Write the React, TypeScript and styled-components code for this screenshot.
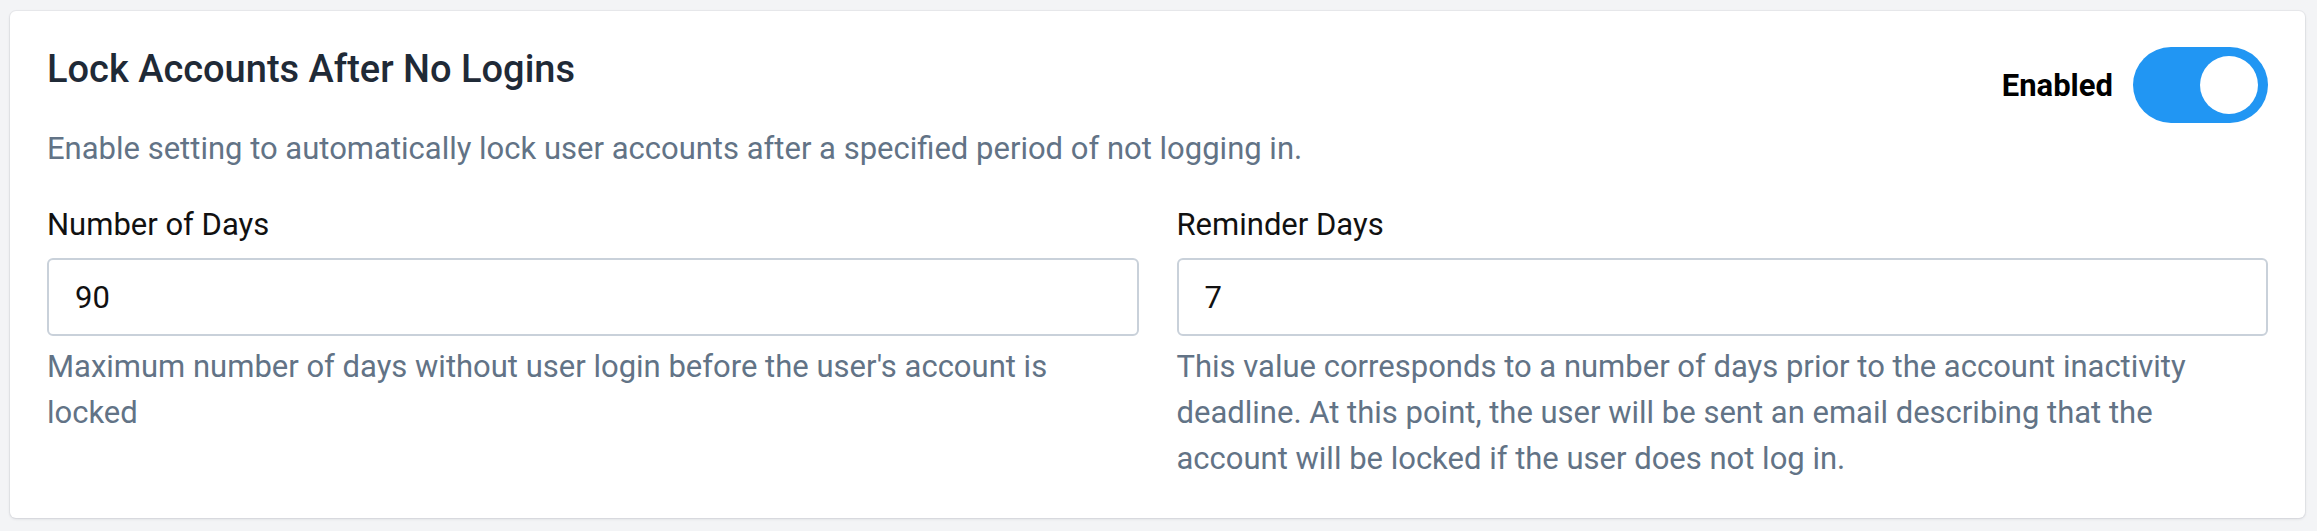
import React, { useState } from 'react';
import styled, { createGlobalStyle } from 'styled-components';

const GlobalStyle = createGlobalStyle`
    html, body {
        margin: 0;
        padding: 0;
        background: #f3f4f6;
        font-family: Roboto, 'Liberation Sans', Arial, sans-serif;
    }
    * {
        box-sizing: border-box;
    }
`;

const Page = styled.div`
    padding: 11px 12px 14px 10px;
`;

const Card = styled.section`
    background: #fff;
    border-radius: 6px;
    box-shadow: 0 1px 3px rgba(15, 23, 42, 0.12), 0 0 0 1px rgba(15, 23, 42, 0.04);
    padding: 36px 37px 36px 37px;
`;

const Header = styled.div`
    display: flex;
    justify-content: space-between;
    align-items: flex-start;
`;

const Title = styled.h2`
    margin: 0;
    font-size: 38px;
    line-height: 44px;
    font-weight: 500;
    color: #1f2a37;
`;

const ToggleWrap = styled.label`
    display: flex;
    align-items: center;
    gap: 20px;
    cursor: pointer;
`;

const ToggleText = styled.span`
    font-size: 31px;
    font-weight: 700;
    color: #000;
`;

const Track = styled.button<{ $on: boolean }>`
    width: 135px;
    height: 76px;
    border: none;
    border-radius: 38px;
    padding: 0 10px;
    display: flex;
    align-items: center;
    justify-content: ${(p) => (p.$on ? 'flex-end' : 'flex-start')};
    background: ${(p) => (p.$on ? '#2196f3' : '#cbd5e1')};
    cursor: pointer;
`;

const Knob = styled.span`
    width: 58px;
    height: 58px;
    border-radius: 50%;
    background: #fff;
`;

const Description = styled.p`
    margin: 3px 0 0;
    font-size: 31px;
    line-height: 46px;
    color: #627386;
`;

const Fields = styled.div`
    display: grid;
    grid-template-columns: 1fr 1fr;
    column-gap: 38px;
    margin-top: 30px;
`;

const Field = styled.div`
    display: flex;
    flex-direction: column;
`;

const Label = styled.label`
    font-size: 31px;
    line-height: 46px;
    color: #111;
`;

const Input = styled.input`
    margin-top: 10px;
    height: 78px;
    width: 100%;
    border: 2px solid #c9d1da;
    border-radius: 6px;
    padding: 0 26px;
    font-family: inherit;
    font-size: 31px;
    color: #111;
    background: #fff;
    outline: none;
`;

const Help = styled.p`
    margin: 8px 0 0;
    font-size: 31px;
    line-height: 46px;
    color: #627386;
`;

const fields = [
    {
        id: 'days',
        label: 'Number of Days',
        value: '90',
        help: "Maximum number of days without user login before the user's account is locked",
    },
    {
        id: 'reminder',
        label: 'Reminder Days',
        value: '7',
        help: 'This value corresponds to a number of days prior to the account inactivity deadline. At this point, the user will be sent an email describing that the account will be locked if the user does not log in.',
    },
];

const App = () => {
    const [enabled, setEnabled] = useState(true);
    return (
        <Page>
            <GlobalStyle />
            <Card>
                <Header>
                    <Title>Lock Accounts After No Logins</Title>
                    <ToggleWrap>
                        <ToggleText>Enabled</ToggleText>
                        <Track
                            type="button"
                            $on={enabled}
                            onClick={() => setEnabled(!enabled)}
                        >
                            <Knob />
                        </Track>
                    </ToggleWrap>
                </Header>
                <Description>
                    Enable setting to automatically lock user accounts after a
                    specified period of not logging in.
                </Description>
                <Fields>
                    {fields.map((item) => (
                        <Field key={item.id}>
                            <Label htmlFor={item.id}>{item.label}</Label>
                            <Input id={item.id} defaultValue={item.value} />
                            <Help>{item.help}</Help>
                        </Field>
                    ))}
                </Fields>
            </Card>
        </Page>
    );
};

export default App;
